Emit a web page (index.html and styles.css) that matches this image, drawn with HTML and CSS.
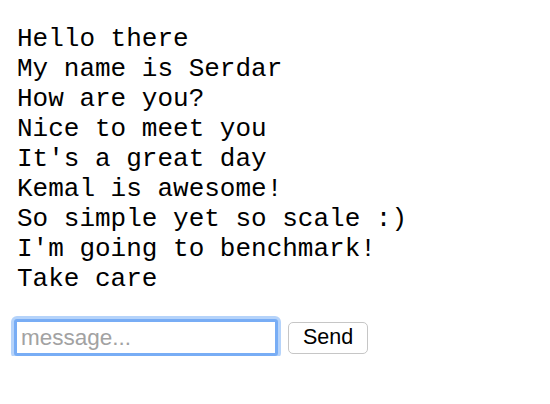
FILE: index.html
```html
<!DOCTYPE html>
<html>
<head>
<meta charset="utf-8">
<link rel="stylesheet" href="styles.css">
</head>
<body>
<div class="page">
  <div class="messages">
    <div class="msg">Hello there</div>
    <div class="msg">My name is Serdar</div>
    <div class="msg">How are you?</div>
    <div class="msg">Nice to meet you</div>
    <div class="msg">It's a great day</div>
    <div class="msg">Kemal is awesome!</div>
    <div class="msg">So simple yet so scale :)</div>
    <div class="msg">I'm going to benchmark!</div>
    <div class="msg">Take care</div>
  </div>
  <form class="composer">
    <input class="field" type="text" placeholder="message...">
    <button class="send" type="button">Send</button>
  </form>
</div>
</body>
</html>
```

FILE: styles.css
```css
html, body {
  margin: 0;
  padding: 0;
  background: #fff;
}
.page {
  padding: 24px 0 0 0;
}
.messages {
  padding-left: 17px;
  font-family: "Liberation Mono", "Courier New", monospace;
  font-size: 26px;
  line-height: 30px;
  color: #000;
}
.msg {
  white-space: pre;
}
.composer {
  display: flex;
  align-items: center;
  gap: 10px;
  margin-top: 25px;
  padding-left: 14px;
}
.field {
  box-sizing: border-box;
  width: 264px;
  height: 37px;
  margin: 0;
  padding: 1px 4px 0 4px;
  border: 3px solid #78adf5;
  border-radius: 3px;
  box-shadow: 0 0 0 3px #b5d3fa;
  outline: none;
  font-family: "Liberation Sans", Arial, sans-serif;
  font-size: 22.5px;
  color: #000;
}
.field::placeholder {
  color: #a2a2a2;
}
.send {
  box-sizing: border-box;
  width: 80px;
  height: 32px;
  padding: 0;
  border: 1px solid #c6c6c6;
  border-radius: 5px;
  background: #fff;
  font-family: "Liberation Sans", Arial, sans-serif;
  font-size: 21.5px;
  color: #000;
}
```
